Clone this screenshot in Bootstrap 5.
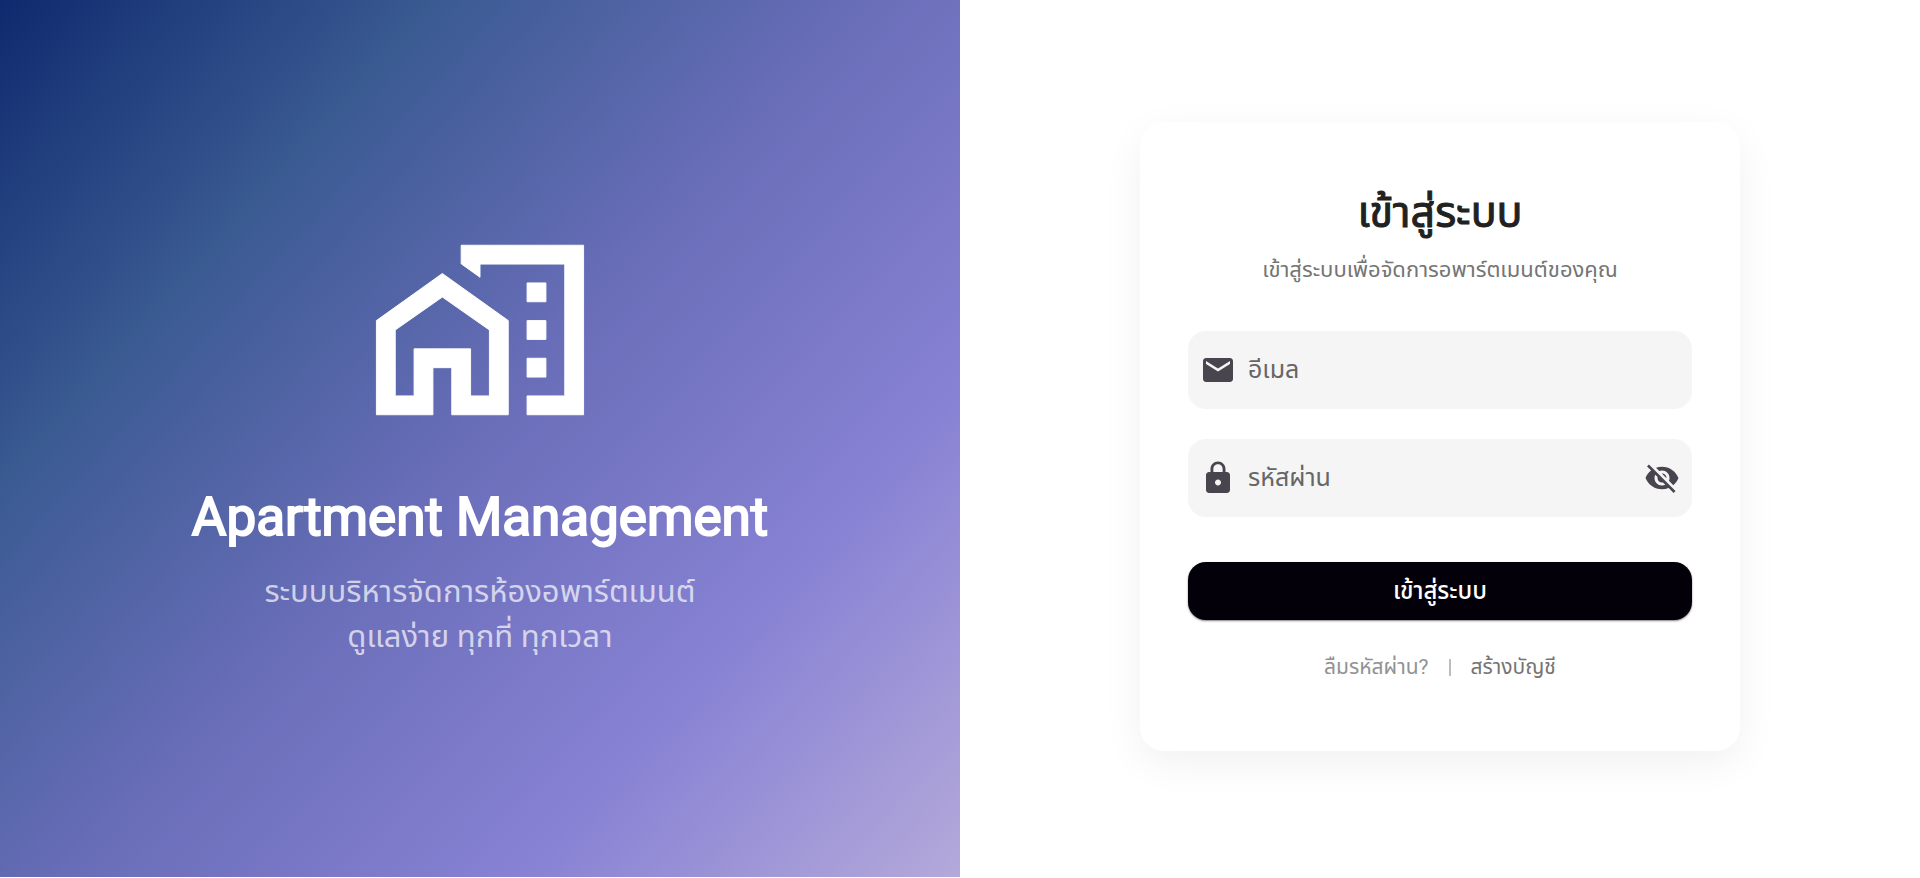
<!DOCTYPE html>
<html lang="th">
<head>
<meta charset="utf-8">
<meta name="viewport" content="width=device-width, initial-scale=1">
<title>Apartment Management</title>
<link href="https://cdn.jsdelivr.net/npm/bootstrap@5.3.0/dist/css/bootstrap.min.css" rel="stylesheet">
<style>
  body { font-family: Roboto, "Noto Sans Thai", "Noto Sans", sans-serif; background: #fff; }
  .page-split { min-height: calc(100vh - 1px); }
  .brand-panel { background: linear-gradient(132deg, #0f2a6e 0%, #3a5a92 25%, #6a6eb9 50%, #8882d4 75%, #b4a9da 100%); padding: 0 24px 2px; }
  .brand-logo { width: 226px; height: 226px; margin-bottom: 42px; }
  .brand-title { font-size: 53px; line-height: 64px; font-weight: 400; -webkit-text-stroke: 2px currentColor; margin-bottom: 20px; }
  .brand-text { font-size: 31px; line-height: 45px; color: rgba(255, 255, 255, .7); }
  .login-card { max-width: 600px; padding: 60px 48px 68px; border-radius: 24px; box-shadow: 0 12px 40px rgba(0, 0, 0, .06); }
  .login-title { font-size: 43px; line-height: 60px; font-weight: 400; -webkit-text-stroke: 1px currentColor; color: #212121; margin-bottom: 12px; }
  .login-lead { font-size: 22px; line-height: 32px; color: #757575; margin-bottom: 45px; }
  .field { height: 78px; border-radius: 18px; background: #f5f5f5; color: #49454f; padding: 0 12px; }
  .field + .field { margin-top: 30px; }
  .field:focus-within { box-shadow: inset 0 0 0 2px #49454f; }
  .field .btn { color: #49454f; }
  .field svg { display: block; width: 36px; height: 36px; fill: currentColor; }
  .field input { font-size: 25px; padding: 0 12px; color: #49454f; }
  .field input::placeholder { color: #666; opacity: 1; }
  .submit { height: 58px; margin-top: 45px; border-radius: 18px; background: #040009; color: #fff; font-size: 24px; line-height: 32px; font-weight: 500; box-shadow: 0 1px 2px rgba(0, 0, 0, .5); }
  .submit:hover, .submit:active { background: #1a1620 !important; color: #fff !important; }
  .form-links { margin-top: 31px; gap: 20px; font-size: 21px; line-height: 32px; }
  .form-links a { color: #757575; }
  .form-links .forgot { color: #929292; }
  .form-links .divider { width: 2px; height: 17px; background: #bdbdbd; }
</style>
</head>
<body>
<main class="container-fluid p-0">
  <div class="page-split row g-0">
    <section class="brand-panel col-md-6 d-flex flex-column align-items-center justify-content-center text-center text-white">
      <svg class="brand-logo" viewBox="0 0 24 24" fill="#fff" fill-rule="evenodd" stroke="#fff" stroke-width=".1" stroke-linejoin="round" aria-hidden="true">
        <path d="M1 11v10h6v-5h2v5h6V11L8 6zM13 19h-2v-5H5v5H3v-7l5-3.500 5 3.500z"/>
        <path d="M10 3v1.970l2 1.430V5h9v14h-4v2h6V3zM17 7h2v2h-2zM17 11h2v2h-2zM17 15h2v2h-2z"/>
      </svg>
      <h1 class="brand-title">Apartment Management</h1>
      <p class="brand-text mb-0">ระบบบริหารจัดการห้องอพาร์ตเมนต์<br>ดูแลง่าย ทุกที่ ทุกเวลา</p>
    </section>
    <section class="col-md-6 d-flex align-items-center justify-content-center pb-1">
      <form class="login-card w-100 bg-white">
        <h2 class="login-title text-center">เข้าสู่ระบบ</h2>
        <p class="login-lead text-center">เข้าสู่ระบบเพื่อจัดการอพาร์ตเมนต์ของคุณ</p>
        <div class="field d-flex align-items-center">
          <label for="email" aria-label="อีเมล">
            <svg viewBox="0 0 24 24" aria-hidden="true"><path d="M20 4H4c-1.100 0-1.990.9-1.990 2L2 18c0 1.100.9 2 2 2h16c1.100 0 2-.9 2-2V6c0-1.100-.9-2-2-2zm0 4l-8 5-8-5V6l8 5 8-5v2z"/></svg>
          </label>
          <input type="email" id="email" class="form-control border-0 bg-transparent shadow-none" placeholder="อีเมล">
        </div>
        <div class="field d-flex align-items-center">
          <label for="password" aria-label="รหัสผ่าน">
            <svg viewBox="0 0 24 24" aria-hidden="true"><path d="M18 8h-1V6c0-2.760-2.240-5-5-5S7 3.240 7 6v2H6c-1.100 0-2 .9-2 2v10c0 1.100.9 2 2 2h12c1.100 0 2-.9 2-2V10c0-1.100-.9-2-2-2zm-6 9c-1.100 0-2-.9-2-2s.9-2 2-2 2 .9 2 2-.9 2-2 2zm3.100-9H8.900V6c0-1.710 1.390-3.100 3.100-3.100 1.710 0 3.100 1.390 3.100 3.100v2z"/></svg>
          </label>
          <input type="password" id="password" class="form-control border-0 bg-transparent shadow-none" placeholder="รหัสผ่าน">
          <button type="button" id="toggle" class="btn border-0 p-0" aria-label="แสดงรหัสผ่าน">
            <svg viewBox="0 0 24 24" aria-hidden="true"><path d="M12 7c2.760 0 5 2.240 5 5 0 .65-.13 1.260-.36 1.830l2.920 2.920c1.510-1.260 2.700-2.890 3.430-4.750-1.730-4.390-6-7.500-11-7.500-1.400 0-2.740.25-3.980.7l2.160 2.160C10.740 7.130 11.350 7 12 7zM2 4.270l2.280 2.280.46.46C3.080 8.300 1.780 10.020 1 12c1.730 4.390 6 7.500 11 7.500 1.550 0 3.030-.3 4.380-.84l.42.42L19.730 22 21 20.730 3.270 3 2 4.270zM7.530 9.800l1.550 1.550c-.05.21-.08.43-.08.65 0 1.660 1.340 3 3 3 .22 0 .44-.03.65-.08l1.550 1.550c-.67.33-1.410.53-2.200.53-2.760 0-5-2.240-5-5 0-.79.2-1.530.53-2.200zm4.310-.78l3.150 3.150.02-.16c0-1.660-1.340-3-3-3l-.17.01z"/></svg>
          </button>
        </div>
        <button class="submit btn border-0 w-100 d-flex align-items-center justify-content-center" type="submit">เข้าสู่ระบบ</button>
        <div class="form-links d-flex align-items-center justify-content-center">
          <a href="#forgot" class="forgot text-decoration-none">ลืมรหัสผ่าน?</a>
          <span class="divider"></span>
          <a href="#register" class="text-decoration-none">สร้างบัญชี</a>
        </div>
      </form>
    </section>
  </div>
</main>
<script src="https://cdn.jsdelivr.net/npm/bootstrap@5.3.0/dist/js/bootstrap.bundle.min.js"></script>
<script>
  document.getElementById('toggle').addEventListener('click', () => {
    const field = document.getElementById('password');
    field.type = field.type === 'password' ? 'text' : 'password';
  });
</script>
</body>
</html>
